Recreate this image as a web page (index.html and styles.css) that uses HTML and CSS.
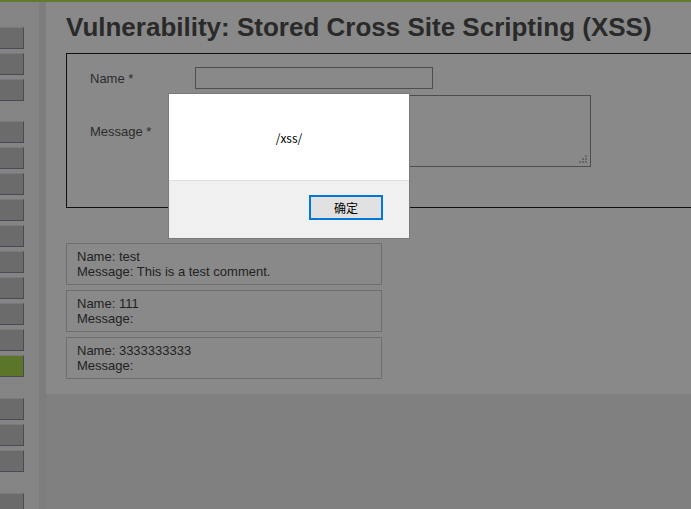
FILE: index.html
```html
<!DOCTYPE html>
<html>
<head>
<meta charset="utf-8">
<title>Vulnerability: Stored Cross Site Scripting (XSS)</title>
<link rel="stylesheet" href="styles.css">
</head>
<body>
<div class="page">
  <nav class="sidebar">
    <ul class="menu-block">
      <li class="menu-btn"></li>
      <li class="menu-btn"></li>
      <li class="menu-btn"></li>
    </ul>
    <ul class="menu-block">
      <li class="menu-btn"></li>
      <li class="menu-btn"></li>
      <li class="menu-btn"></li>
      <li class="menu-btn"></li>
      <li class="menu-btn"></li>
      <li class="menu-btn"></li>
      <li class="menu-btn"></li>
      <li class="menu-btn"></li>
      <li class="menu-btn"></li>
      <li class="menu-btn selected"></li>
    </ul>
    <ul class="menu-block">
      <li class="menu-btn"></li>
      <li class="menu-btn"></li>
      <li class="menu-btn"></li>
    </ul>
    <ul class="menu-block">
      <li class="menu-btn"></li>
    </ul>
  </nav>
  <div class="strip"></div>
  <main class="main">
    <h1 class="title">Vulnerability: Stored Cross Site Scripting (XSS)</h1>
    <div class="vuln-box">
      <div class="form-grid">
        <label class="form-label">Name *</label>
        <div class="input-name"></div>
        <label class="form-label">Message *</label>
        <div class="input-message">
          <svg class="grip" width="9" height="9" viewBox="0 0 9 9">
            <rect x="6" y="0" width="2" height="2" fill="#666"/>
            <rect x="3" y="3" width="2" height="2" fill="#666"/>
            <rect x="6" y="3" width="2" height="2" fill="#666"/>
            <rect x="0" y="6" width="2" height="2" fill="#666"/>
            <rect x="3" y="6" width="2" height="2" fill="#666"/>
            <rect x="6" y="6" width="2" height="2" fill="#666"/>
          </svg>
        </div>
        <div></div>
        <div class="form-actions"></div>
      </div>
    </div>
    <div class="comments">
      <div class="comment">Name: test<br>Message: This is a test comment.</div>
      <div class="comment">Name: 111<br>Message: </div>
      <div class="comment">Name: 3333333333<br>Message: </div>
    </div>
  </main>
</div>
<div class="dialog">
  <div class="dialog-body">/xss/</div>
  <div class="dialog-footer">
    <span class="dialog-ok">确定</span>
  </div>
</div>
</body>
</html>
```
FILE: styles.css
```css
html, body {
  margin: 0;
  padding: 0;
}
body {
  width: 691px;
  height: 509px;
  overflow: hidden;
  background: #808080;
  font-family: "Liberation Sans", Arial, sans-serif;
  position: relative;
}
.page {
  display: flex;
  align-items: flex-start;
  border-top: 2px solid #627a2c;
  width: 900px;
  height: 507px;
}
.sidebar {
  width: 39px;
  height: 507px;
  background: #848484;
  flex: none;
  padding-top: 25px;
  box-sizing: border-box;
}
.menu-block {
  list-style: none;
  margin: 0 0 21px 0;
  padding: 0;
  display: flex;
  flex-direction: column;
  gap: 4px;
}
.menu-block:first-child {
  margin-bottom: 20px;
}
.menu-btn {
  width: 24px;
  height: 22px;
  box-sizing: border-box;
  background: #6b6b6b;
  border-top: 1px solid #7a7a7a;
  border-right: 1px solid #4a4a55;
  border-bottom: 1px solid #4a4a55;
}
.menu-btn.selected {
  background: #5b7529;
}
.strip {
  width: 7px;
  height: 507px;
  background: #7d7d7d;
  flex: none;
}
.main {
  flex: none;
  width: 800px;
  background: #898989;
  padding: 11px 20px 15px 20px;
  color: #262626;
}
.title {
  font-size: 26px;
  font-weight: bold;
  line-height: 28px;
  margin: 0 0 12px 0;
  color: #2a2a2a;
}
.vuln-box {
  border: 1px solid #111;
  padding: 13px 23px 10px 23px;
  width: 640px;
}
.form-grid {
  display: grid;
  grid-template-columns: 105px auto;
  row-gap: 6px;
  align-items: center;
  justify-items: start;
}
.form-label {
  font-size: 13px;
  color: #2c2c2c;
}
.input-name {
  width: 238px;
  height: 22px;
  box-sizing: border-box;
  border: 1px solid #4e4e4e;
}
.input-message {
  width: 396px;
  height: 72px;
  box-sizing: border-box;
  border: 1px solid #4e4e4e;
  position: relative;
}
.grip {
  position: absolute;
  right: 2px;
  bottom: 2px;
}
.form-actions {
  height: 22px;
  margin-top: 2px;
}
.comments {
  margin-top: 35px;
  display: flex;
  flex-direction: column;
  gap: 5px;
}
.comment {
  width: 316px;
  box-sizing: border-box;
  border: 1px solid #6e6e6e;
  padding: 5px 10px;
  font-size: 13px;
  line-height: 15px;
  color: #222;
}
.dialog {
  position: absolute;
  left: 168px;
  top: 93px;
  width: 242px;
  height: 146px;
  box-sizing: border-box;
  border: 1px solid #7a7a7a;
  background: #f0f0f0;
  display: flex;
  flex-direction: column;
  font-family: "Noto Sans CJK SC", "Noto Sans", sans-serif;
}
.dialog-body {
  height: 86px;
  background: #fff;
  border-bottom: 1px solid #dfdfdf;
  display: flex;
  align-items: center;
  justify-content: center;
  font-size: 12px;
  color: #000;
}
.dialog-footer {
  flex: 1;
  display: flex;
  justify-content: flex-end;
  align-items: flex-start;
  padding: 14px 26px 0 0;
}
.dialog-ok {
  width: 74px;
  height: 25px;
  box-sizing: border-box;
  border: 2px solid #0078d7;
  background: #e1e1e1;
  font-size: 12px;
  color: #000;
  display: flex;
  align-items: center;
  justify-content: center;
}
```
